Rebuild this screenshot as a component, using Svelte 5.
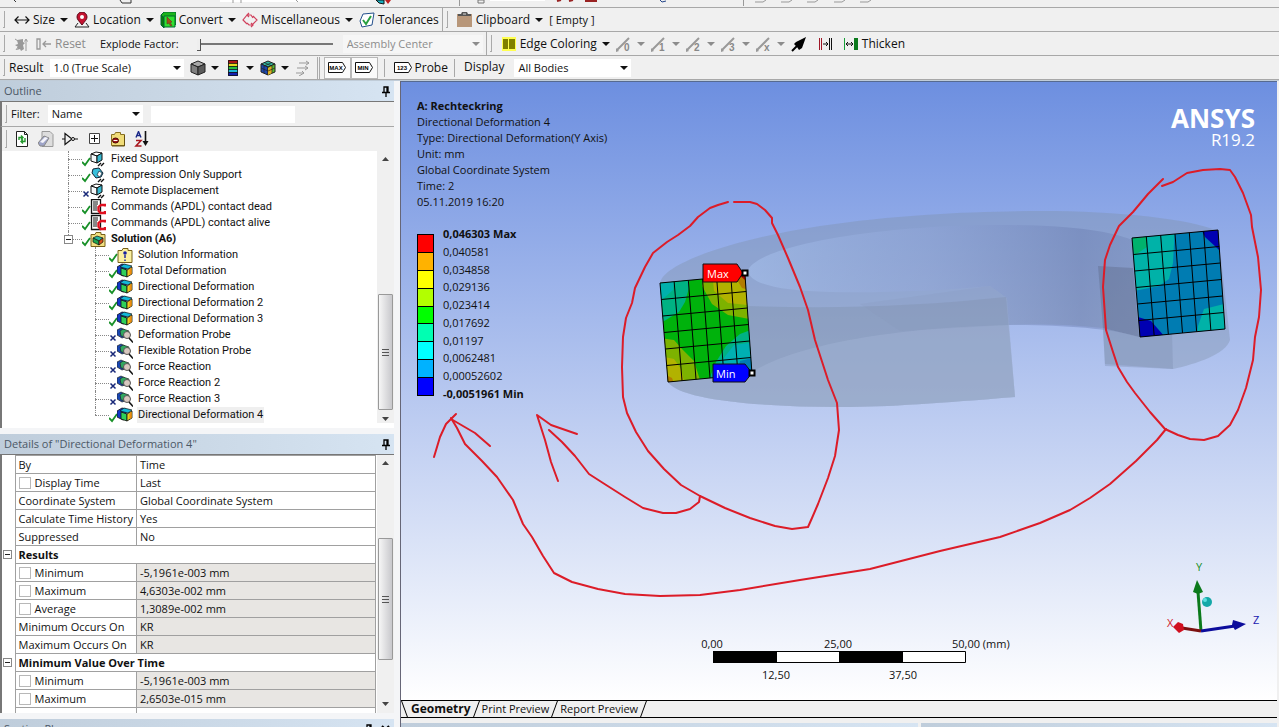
<script>
  const supports = [
    { label: 'Fixed Support', icon: 'support', ok: true },
    { label: 'Compression Only Support', icon: 'compression', ok: true },
    { label: 'Remote Displacement', icon: 'support', ok: false },
    { label: 'Commands (APDL) contact dead', icon: 'commands', ok: true },
    { label: 'Commands (APDL) contact alive', icon: 'commands', ok: true },
  ];

  const results = [
    { label: 'Solution Information', icon: 'info', ok: true },
    { label: 'Total Deformation', icon: 'result', ok: true },
    { label: 'Directional Deformation', icon: 'result', ok: true },
    { label: 'Directional Deformation 2', icon: 'result', ok: true },
    { label: 'Directional Deformation 3', icon: 'result', ok: true },
    { label: 'Deformation Probe', icon: 'probe', ok: false },
    { label: 'Flexible Rotation Probe', icon: 'probe', ok: false },
    { label: 'Force Reaction', icon: 'probe', ok: false },
    { label: 'Force Reaction 2', icon: 'probe', ok: false },
    { label: 'Force Reaction 3', icon: 'probe', ok: false },
    { label: 'Directional Deformation 4', icon: 'result', ok: true, selected: true },
  ];

  const details = [
    { name: 'By', value: 'Time' },
    { name: 'Display Time', value: 'Last', check: true },
    { name: 'Coordinate System', value: 'Global Coordinate System' },
    { name: 'Calculate Time History', value: 'Yes' },
    { name: 'Suppressed', value: 'No' },
    { group: 'Results' },
    { name: 'Minimum', value: '-5,1961e-003 mm', check: true, locked: true },
    { name: 'Maximum', value: '4,6303e-002 mm', check: true, locked: true },
    { name: 'Average', value: '1,3089e-002 mm', check: true, locked: true },
    { name: 'Minimum Occurs On', value: 'KR', locked: true },
    { name: 'Maximum Occurs On', value: 'KR', locked: true },
    { group: 'Minimum Value Over Time' },
    { name: 'Minimum', value: '-5,1961e-003 mm', check: true, locked: true },
    { name: 'Maximum', value: '2,6503e-015 mm', check: true, locked: true },
  ];

  const bands = ['#ff0000', '#ffb200', '#ffff00', '#b2ff00', '#00ff00', '#00ffb2', '#00ffff', '#00b2ff', '#0000ff'];
  const limits = ['0,046303 Max', '0,040581', '0,034858', '0,029136', '0,023414', '0,017692', '0,01197', '0,0062481', '0,00052602', '-0,0051961 Min'];

  // corners run top left, top right, bottom right, bottom left
  const leftSection = [[660, 283], [745, 275], [752, 374], [668, 382]];
  const rightSection = [[1132, 238], [1218, 230], [1225, 329], [1140, 337]];

  const mix = (a, b, t) => [a[0] + (b[0] - a[0]) * t, a[1] + (b[1] - a[1]) * t];

  function meshPath([tl, tr, br, bl], n = 6) {
    let d = '';
    for (let i = 0; i <= n; i++) {
      const t = i / n;
      d += `M${mix(tl, tr, t)}L${mix(bl, br, t)}M${mix(tl, bl, t)}L${mix(tr, br, t)}`;
    }
    return d;
  }

  const edges = ['0', '1', '2', '3', 'x'];
</script>

{#snippet caret()}
  <svg class="caret" width="8" height="4" viewBox="0 0 8 4"><path d="M0 0h8L4 4z" fill="currentColor" /></svg>
{/snippet}

{#snippet pin()}
  <svg width="8" height="11" viewBox="0 0 8 11"><path d="M2 6V1h4v5M5 1v5M0 6.500h8M4 7v4" fill="none" stroke="#000" stroke-width="1.300" /></svg>
{/snippet}

{#snippet icon(name)}
  <svg class="icon" width="16" height="16" viewBox="0 0 16 16" fill="none" aria-hidden="true">
    {#if name === 'size'}
      <path d="M1 8h14M4.500 4.500L1 8l3.500 3.500M11.500 4.500L15 8l-3.500 3.500" stroke="#111" stroke-width="1.200" />
    {:else if name === 'location'}
      <path d="M8 13C5 9 3 7.500 3 5a5 5 0 0110 0c0 2.500-2 4-5 8z" fill="#c41230" stroke="#5c0818" />
      <circle cx="8" cy="5" r="2" fill="#fff" />
      <path d="M4 11l-3 4h14l-3-4" stroke="#222" />
    {:else if name === 'convert'}
      <path d="M1 3l3-3h12v12l-3 3" fill="#1bb41b" stroke="#063" />
      <path d="M1 3l3 3v10l-3-3z" fill="#0a7a0a" stroke="#063" />
      <path d="M4 4h11v11H4z" fill="#2fe02f" stroke="#063" />
      <path d="M7 5l5 5-2 .5 2 3-1.500.5-1.500-3L7 12z" fill="#a05018" stroke="#632" stroke-width=".6" />
    {:else if name === 'misc'}
      <path d="M5 3L1 8l4 4M11 4l4 4-5 5M6 3h3l2 3M10 13H7l-2-2M7 1L5 3l2 2M9 11l2 2-2 2" stroke="#d0405c" stroke-width="1.200" />
    {:else if name === 'tolerance'}
      <path d="M4 2l11-1-2 12-10 2-2-6z" fill="#fff" stroke="#24508c" />
      <path d="M4 8l3 4 5-8" stroke="#28a040" stroke-width="2" />
    {:else if name === 'clipboard'}
      <path d="M0 2h15v13H0z" fill="#b8977a" />
      <path d="M1 4h13v-2h-3l-1-2H5L4 2H1z" fill="#555" />
      <path d="M6 2h3" stroke="#ddd" />
    {:else if name === 'explode'}
      <path d="M3 4l6-1v3l2 1-2 2 1 4-3 2-1-2-3 1 1-3-3-2 3-1z" fill="#999" />
      <path d="M1 3l3 2M2 14l2-3M12 15V4M10.500 5.500L12 3l1.500 2.500" stroke="#999" />
    {:else if name === 'reset'}
      <path d="M1 3h3v10H1zM7 8h8M10 5L7 8l3 3" stroke="#999" stroke-width="1.300" />
    {:else if name === 'edgeColor'}
      <path d="M1 1h14v14H1z" fill="#ffff50" />
      <path d="M2 3h5v10H2zM8 3h6v10H8z" fill="#808000" />
    {:else if name === 'pointer'}
      <path d="M3 8l2-2L15 1l-4 11-3 2-2-3z" fill="#000" />
      <path d="M1 15l6-6" stroke="#000" stroke-width="2" />
    {:else if name === 'gap'}
      <path d="M2.500 2v12M4.500 2v12" stroke="#a01828" /><path d="M12.500 2v12M14.500 2v12M6 8h5M9 6l2 2-2 2" stroke="#111" />
    {:else if name === 'thicken'}
      <path d="M1.500 2v12" stroke="#18a038" /><path d="M11 2h4v12h-4z" fill="#0b7a1c" /><path d="M3 8h7M5 6L3 8l2 2M8 6l2 2-2 2" stroke="#111" />
    {:else if name === 'grayCube'}
      <path d="M1 4l7-3 7 3-7 3z" fill="#a8a8a8" stroke="#222" /><path d="M1 4l7 3v8l-7-3z" fill="#808080" stroke="#222" /><path d="M15 4L8 7v8l7-3z" fill="#5c5c5c" stroke="#222" />
    {:else if name === 'legend'}
      <path d="M3 0h10v4H3z" fill="#b01818" /><path d="M3 3h10v4H3z" fill="#e8d820" /><path d="M3 6h10v4H3z" fill="#28c040" /><path d="M3 9h10v3H3z" fill="#20b8d8" /><path d="M3 12h10v4H3z" fill="#1420b0" />
      <path d="M3.500.5h9v15h-9zM3 3.500h10M3 6.500h10M3 9.500h10M3 12.500h10" stroke="#111" stroke-width=".8" />
    {:else if name === 'contour'}
      <path d="M1 4l7-3 7 3-7 3z" fill="#30b8a0" stroke="#222" /><path d="M1 4l7 3v8l-7-3z" fill="#1c48b0" stroke="#222" /><path d="M15 4L8 7v8l7-3z" fill="#58b830" stroke="#222" />
      <path d="M8 8l4-2v7l-4 2z" fill="#e0b020" /><path d="M4 2.500L12 6v7M12 2.500L4 6v7M1 8l7 3 7-3" stroke="#222" stroke-width=".7" />
    {:else if name === 'vectors'}
      <path d="M4 3h10M11 1l3 2-3 2M2 8h11M10 6l3 2-3 2M1 13h8M7 11l2 2-5 3" stroke="#999" />
    {:else if name === 'refresh'}
      <path d="M2.500.5h8l3 3v12h-11z" fill="#fff" stroke="#222" /><path d="M10.500.5v3h3" stroke="#222" />
      <path d="M5 9V6.500h4M7 4.500l2 2-2 2M11 7v3.500H7M9 8.500l-2 2 2 2" stroke="#22982c" stroke-width="1.400" />
    {:else if name === 'eraser'}
      <path d="M4 .5h8l3 3v12H4z" fill="#ddd" stroke="#999" /><path d="M0 12l6-7 5 2-5 8H2z" fill="#9ea4c8" stroke="#888" /><path d="M2 11l5-5 3 1-5 5z" fill="#f4f4fa" />
    {:else if name === 'gate'}
      <path d="M0 8h3M12.500 8H16M3 2.500v11L10 8z" stroke="#111" stroke-width="1.200" /><circle cx="11" cy="8" r="1.500" fill="#fff" stroke="#111" />
    {:else if name === 'expand'}
      <path d="M3.500 2.500h10v10h-10z" fill="#fff" stroke="#444" /><path d="M5 7.500h7M8.500 4v7" stroke="#111" />
    {:else if name === 'folder'}
      <path d="M1.500 3.500h3l1-2h5v2h4v11h-13z" fill="#f0dc78" stroke="#887020" /><path d="M14.500 4v11H2" stroke="#665010" /><ellipse cx="5.500" cy="9.500" rx="3" ry="2.500" fill="#a01818" stroke="#400" /><path d="M3.500 9.500h4" stroke="#fff" />
    {:else if name === 'sort'}
      <path d="M2 6.500L4.500.5 7 6.500M3 4.500h3" stroke="#1a2888" stroke-width="1.400" /><path d="M2 9.500h5l-5 5.500h5.500" stroke="#a81820" stroke-width="1.600" /><path d="M11.500 0v12" stroke="#111" stroke-width="1.600" /><path d="M8.500 10h6l-3 5z" fill="#111" />
    {:else if name === 'support'}
      <path d="M1 3l5-2 6 1-5 3z" fill="#fff" stroke="#111" /><path d="M1 3l6 2v7l-6-2z" fill="#f4f8fa" stroke="#111" /><path d="M12 2L7 5v7l5-3z" fill="#38b8d0" stroke="#111" /><path d="M8 15l3-3M11 15l3-3" stroke="#111" stroke-width="1.400" />
    {:else if name === 'compression'}
      <path d="M3 2l6-1 4 5-2 4-5 1-4-5z" fill="#38c0dc" stroke="#123" /><path d="M9 4l3 2-2 4-3-2z" fill="#fff" stroke="#123" stroke-width=".7" /><path d="M8 15l3-3M11 15l3-3" stroke="#111" stroke-width="1.400" />
    {:else if name === 'commands'}
      <path d="M1.500.5h9v14h-9z" fill="#fff" stroke="#111" stroke-width="1.300" /><path d="M3 3h5M3 5h5M3 7h4M3 9h4M3 11h4" stroke="#111" /><path d="M15 7.500V6h-4L8.500 8v3.500l2 2.500h4.500v-2" stroke="#e01020" stroke-width="2.400" />
    {:else if name === 'solution'}
      <path d="M1 3.500h4l1-2h5v2h4v12H1z" fill="#f2e080" stroke="#776018" /><path d="M3 7l4-2 6 2-4 3z" fill="#28b8a0" stroke="#111" stroke-width=".7" /><path d="M3 7l6 3v4l-6-3z" fill="#20a850" stroke="#111" stroke-width=".7" /><path d="M9 10l4-3v4l-4 3z" fill="#d85018" stroke="#111" stroke-width=".7" />
    {:else if name === 'info'}
      <path d="M1 3.500h4l1-2h5v2h4v12H1z" fill="#fbf0a0" stroke="#776018" /><circle cx="8" cy="6" r="1.800" fill="#1620a0" /><path d="M8 8v3M8 12.500v1.500" stroke="#1620a0" stroke-width="1.400" />
    {:else if name === 'result'}
      <path d="M0 4l5-3 4 1v10l-3 1-6-3z" fill="#1238c8" stroke="#111" stroke-width=".8" />
      <path d="M3 4l4-3 8 2-4 3z" fill="#12b7d8" stroke="#111" stroke-width=".7" />
      <path d="M4 5l6 2v7l-6-2z" fill="#2ed05a" stroke="#111" stroke-width=".8" />
      <path d="M10 7l5-3v7l-5 3z" fill="#e8d020" stroke="#111" stroke-width=".8" />
      <path d="M12.500 6l2-1v6l-2 1z" fill="#f08a10" />
    {:else if name === 'probe'}
      <path d="M0 3l4-2 4 2v7l-3 1-5-3z" fill="#1848b8" stroke="#222" stroke-width=".7" /><path d="M3 4l3-2 6 2-2 6-6-1z" fill="#30a860" stroke="#222" stroke-width=".7" />
      <circle cx="10" cy="8" r="3.500" fill="#d8c8c0" stroke="#555" /><path d="M12 11l4 4.500" stroke="#111" stroke-width="1.500" />
    {/if}
  </svg>
{/snippet}

{#snippet tag(text)}
  <svg width="18" height="11" viewBox="0 0 18 11">
    <path d="M.5.5h14l3 5-3 5H.5z" fill="#fff" stroke="#111" />
    <text x="8" y="8" text-anchor="middle" font-size="6" font-weight="bold" font-family="Liberation Sans, sans-serif">{text}</text>
  </svg>
{/snippet}

{#snippet node(item)}
  <div class="row">
    <svg class="mark" width="9" height="16" viewBox="0 0 9 16" fill="none">
      {#if item.ok}
        <path d="M0 11l3 3 5-7" stroke="#189028" stroke-width="1.800" />
      {:else}
        <path d="M1.500 8.500l5 5M6.500 8.500l-5 5" stroke="#182878" stroke-width="1.500" />
      {/if}
    </svg>
    {@render icon(item.icon)}
    <span class="label" class:selected={item.selected} class:strong={item.strong}>{item.label}</span>
  </div>
{/snippet}

{#snippet scrollbar()}
  <div class="scrollbar" aria-hidden="true">
    <svg width="7" height="4" viewBox="0 0 7 4"><path d="M0 4h7L3.500 0z" fill="#444" /></svg>
    <div class="thumb"><i></i><i></i><i></i></div>
    <svg width="7" height="4" viewBox="0 0 7 4"><path d="M0 0h7L3.500 4z" fill="#444" /></svg>
  </div>
{/snippet}

<div class="app">
  <header>
    <div class="bar clipped">
      <svg width="700" height="7" viewBox="0 0 700 7" fill="none" aria-hidden="true">
        <path d="M14 0l2 2M120 0l2 3h9V0" stroke="#333" />
        <path d="M220 0h150" stroke="#fff" stroke-width="4" />
        <path d="M233 0v3M241 0v3M296 0l2 2" stroke="#999" />
        <path d="M376 0h8v4l-5-1z" fill="#18b0c0" stroke="#111" /><path d="M385 0h6l-3 4z" fill="#c02020" />
        <path d="M459.500 0v6" stroke="#999" />
        <path d="M478 0h6v3h-6z" stroke="#777" /><path d="M490 0h55" stroke="#fff" stroke-width="2" />
        <path d="M557 1l4-1M569 1l4-1M585 1h12" stroke="#922" stroke-width="2" />
        <path d="M660 0l2 2 4-1" stroke="#248" />
      </svg>
      <svg width="200" height="7" viewBox="0 0 200 7" fill="none" stroke="#999" aria-hidden="true">
        <path d="M43.500 0v6M55 2h8l3-2M81 2h8l3-2M107 2h8l3-2M134 2h8l3-2M160 2h8l3-2" />
      </svg>
    </div>

    <div class="bar">
      <div class="group">
        <button>{@render icon('size')}Size{@render caret()}</button>
        <button>{@render icon('location')}Location{@render caret()}</button>
        <button>{@render icon('convert')}Convert{@render caret()}</button>
        <button>{@render icon('misc')}Miscellaneous{@render caret()}</button>
        <button>{@render icon('tolerance')}Tolerances</button>
      </div>
      <div class="group">
        <button>{@render icon('clipboard')}Clipboard{@render caret()}</button>
        <span class="small">[ Empty ]</span>
      </div>
    </div>

    <div class="bar">
      <div class="group">
        <button disabled aria-label="Explode">{@render icon('explode')}</button>
        <button disabled>{@render icon('reset')}Reset</button>
        <label class="explode">Explode Factor: <input type="range" min="0" max="100" value="0" /></label>
        <div class="select center">
          <select disabled aria-label="Assembly Center"><option>Assembly Center</option></select>
          {@render caret()}
        </div>
      </div>
      <div class="group">
        <button>{@render icon('edgeColor')}Edge Coloring{@render caret()}</button>
        {#each edges as edge}
          <button disabled aria-label="Edges {edge}">
            <svg width="16" height="16" viewBox="0 0 16 16">
              <path d="M1 14L13 2" stroke="#999" stroke-width="2" /><path d="M0 12l3 3-3 1z" fill="#999" />
              <text x="8" y="15" font-size="10" font-weight="bold" fill="#888" font-family="Liberation Sans, sans-serif">{edge}</text>
            </svg>
            {@render caret()}
          </button>
        {/each}
        <button aria-label="Direction">{@render icon('pointer')}</button>
        <button class="spaced" aria-label="Gap">{@render icon('gap')}</button>
        <button class="spaced">{@render icon('thicken')}Thicken</button>
      </div>
    </div>

    <div class="bar">
      <div class="group tight">
        <label for="scale">Result</label>
        <div class="select scale">
          <select id="scale"><option>1.0 (True Scale)</option></select>
          {@render caret()}
        </div>
        <button aria-label="Geometry">{@render icon('grayCube')}{@render caret()}</button>
        <button aria-label="Contours">{@render icon('legend')}{@render caret()}</button>
        <button aria-label="Edges">{@render icon('contour')}{@render caret()}</button>
        <button disabled aria-label="Vectors">{@render icon('vectors')}</button>
        <span class="toggles">
          <button class="toggle" aria-label="Maximum">{@render tag('MAX')}</button>
          <button class="toggle" aria-label="Minimum">{@render tag('MIN')}</button>
        </span>
        <button class="probe">{@render tag('123')}Probe</button>
        <label class="display" for="bodies">Display</label>
        <div class="select bodies">
          <select id="bodies"><option>All Bodies</option></select>
          {@render caret()}
        </div>
      </div>
    </div>
  </header>

  <main>
    <aside>
      <section class="panel">
        <h2>Outline {@render pin()}</h2>
        <div class="tools filter">
          <label for="filter">Filter:</label>
          <div class="select name">
            <select id="filter"><option>Name</option></select>
            {@render caret()}
          </div>
          <input type="text" aria-label="Filter text" />
        </div>
        <div class="tools icons">
          {#each ['refresh', 'eraser', 'gate', 'expand', 'folder', 'sort'] as name}
            <button aria-label={name}>{@render icon(name)}</button>
          {/each}
        </div>
        <div class="scroller tree">
          <ul>
            {#each supports as item}
              <li>{@render node(item)}</li>
            {/each}
            <li>
              <span class="box"></span>
              {@render node({ label: 'Solution (A6)', icon: 'solution', ok: true, strong: true })}
              <ul>
                {#each results as item}
                  <li>{@render node(item)}</li>
                {/each}
              </ul>
            </li>
          </ul>
          {@render scrollbar()}
        </div>
      </section>

      <section class="panel grow">
        <h2>Details of "Directional Deformation 4" {@render pin()}</h2>
        <div class="scroller details">
          <table>
            <colgroup><col class="gutter" /><col class="name" /><col /></colgroup>
            <tbody>
              {#each details as row}
                <tr>
                  {#if row.group}
                    <td class="gutter"><span class="box"></span></td>
                    <th colspan="2">{row.group}</th>
                  {:else}
                    <td class="gutter"></td>
                    <td>
                      {#if row.check}
                        <label><input type="checkbox" />{row.name}</label>
                      {:else}
                        {row.name}
                      {/if}
                    </td>
                    <td class:locked={row.locked}>{row.value}</td>
                  {/if}
                </tr>
              {/each}
              <tr><td class="gutter"></td><td></td><td></td></tr>
            </tbody>
          </table>
          {@render scrollbar()}
        </div>
      </section>

      <section class="panel cut">
        <h2>
          <span>Section Planes</span>
          {@render pin()}
          <svg width="9" height="9" viewBox="0 0 9 9"><path d="M1 1l7 7M8 1L1 8" stroke="#000" stroke-width="2" /></svg>
        </h2>
      </section>
    </aside>

    <div class="work">
      <div class="viewport">
        <svg class="scene" viewBox="401 82 876 618" fill="none">
          <defs>
            <linearGradient id="wall" x1="0" x2="1">
              <stop offset="0" stop-color="#a9c4f0" stop-opacity=".5" />
              <stop offset=".45" stop-color="#93a8dc" stop-opacity=".35" />
              <stop offset=".85" stop-color="#6a7cb0" stop-opacity=".45" />
              <stop offset="1" stop-color="#7084b4" stop-opacity=".35" />
            </linearGradient>
            <clipPath id="leftClip"><polygon points={leftSection.join(' ')} /></clipPath>
            <clipPath id="rightClip"><polygon points={rightSection.join(' ')} /></clipPath>
          </defs>

          <!-- ring body -->
          <path d="M660 283C664 262 740 238 820 226C900 214 980 211 1040 211C1120 211 1190 219 1218 231L1230 340C1226 354 1196 364 1173 369L1105 364L1103 328C1070 324 1040 324 1009 325L1015 397C940 403 890 407 840 407C760 407 680 400 668 382Z" fill="#7f90a8" fill-opacity=".38" />
          <path d="M748 270C760 245 880 225 1000 225C1070 225 1110 231 1132 240L1140 337C1110 328 1060 325 1009 325L1007 298L990 286C940 291 880 293 830 292C780 291 748 284 748 270Z" fill="url(#wall)" />
          <path d="M748 306C840 309 920 306 1006 297L1015 397C940 403 890 407 840 407C760 407 680 400 668 382L752 374Z" fill="#7c8ea8" fill-opacity=".34" />
          <path d="M752 372C790 348 880 328 1009 325L1015 397C940 403 890 407 840 407C760 407 680 400 668 382Z" fill="#b3c3e8" fill-opacity=".24" />
          <path d="M990 286L1007 298L1009 325L900 331L860 304Z" fill="#8798b8" fill-opacity=".2" />
          <path d="M1098 266L1133 268L1139 337L1103 328Z" fill="#5c6a88" fill-opacity=".4" />
          <path d="M1103 328L1140 337L1172 332L1173 369L1105 366Z" fill="#8090b4" fill-opacity=".4" />

          <g clip-path="url(#leftClip)">
            <path d="M655 270h105v120H655z" fill="#00b20c" />
            <path d="M655 270h34l0 18-4 14-6 10-20 12z" fill="#00b283" />
            <path d="M655 270h20l-2 20-16 14z" fill="#00b0ac" />
            <path d="M704 270h50v50l-26-5-16-11-10-18z" fill="#7db200" />
            <path d="M712 270h44v36l-28-3-14-12z" fill="#b2b200" />
            <path d="M731 270h25v22l-14-4z" fill="#b27c00" />
            <path d="M738 274h14v12z" fill="#b20000" />
            <path d="M660 338l14 2 8 9 12 12 7 22h-40z" fill="#7db200" />
            <path d="M660 356l14 3 7 10 4 16h-25z" fill="#b2b200" />
            <path d="M664 374l8 4 3 8h-12z" fill="#b27c00" />
            <path d="M756 328l-16 6-14 12-10 16-8 20h50z" fill="#00b283" />
            <path d="M756 342l-22 3-14 18-4 20h40z" fill="#00b0b2" />
            <path d="M756 357l-16 4-6 22h24z" fill="#007cb2" />
          </g>
          <path d={meshPath(leftSection)} stroke="#000" />

          <g clip-path="url(#rightClip)">
            <path d="M1125 225h110v120h-110z" fill="#007cb2" />
            <path d="M1125 225h50l-2 38-4 16-10 7-25 5z" fill="#00b2a8" />
            <path d="M1125 225h22v22l-12 8z" fill="#00b26c" />
            <path d="M1199 225h30v34l-24-22z" fill="#0000b2" />
            <path d="M1138 317l13 4 14 16-26 6z" fill="#0000b2" />
            <path d="M1196 340l2-14 6-17 24-6v36z" fill="#00b2a8" />
          </g>
          <path d={meshPath(rightSection)} stroke="#000" />

          <path d="M703 264h34l6 9-6 9h-34z" fill="#f00" stroke="#111" />
          <path d="M713 364h32l7 9-7 9h-32z" fill="#00f" stroke="#111" />
          <path d="M742.500 270.500h5v5h-5zM749.500 370.500h5v5h-5z" fill="#fff" stroke="#000" stroke-width="2" />
          <text x="707" y="278" fill="#fff">Max</text>
          <text x="716" y="378" fill="#fff">Min</text>

          <g class="ink">
            <path d="M728 202L718 205L710 208L698 217L690 226L678 235L667 242L653 253L645 267L635 288L632 303L626 318L623 337L622 367L623 397L627 413L636 432L648 451L664 469L681 485L700 496L725 508L750 518L775 526L792 529L808 527L812 518L818 504L828 478L835 456L839 430L837 403L828 380L815 340L808 310L800 287L788 258L778 235L772 223V218L765 210L757 204L750 202H734" />
            <path d="M1163 179L1148 194L1133 212L1119 226L1110 245L1105 260L1103 287L1106 330L1113 352L1118 367L1127 382L1135 393L1150 412L1165 429L1178 435L1190 439L1204 440L1218 436L1230 425L1238 410L1246 388L1253 360L1255 337L1259 317L1261 290L1258 257L1252 227L1251 215L1243 193L1235 177L1230 170L1220 169L1203 170L1187 173L1173 182L1162 186" />
            <path d="M1166 429L1157 440L1136 461L1110 484L1090 498L1070 510L1040 523L1000 537L940 551L870 569L800 580L740 590L700 595L660 596L625 594L598 589L572 582L554 573L543 556L532 537L523 524L513 500L497 477L482 461L465 444L457 428L451 418" />
            <path d="M434 457L440 437L446 424L456 414M451 419L463 426L475 433L490 446" />
            <path d="M700 496L699 502L690 509L676 513L663 513L643 508L625 497L603 483L589 474L575 456L562 442L549 430" />
            <path d="M558 481L551 462L545 440L537 415L551 425L577 434" />
          </g>

          <g>
            <path d="M713.500 651.500h252v11h-252z" fill="#fff" stroke="#000" />
            <path d="M713 651h64v12h-64zM839 651h64v12h-64z" fill="#000" />
            <text x="712" y="648" text-anchor="middle">0,00</text>
            <text x="838" y="648" text-anchor="middle">25,00</text>
            <text x="952" y="648">50,00 (mm)</text>
            <text x="776" y="679" text-anchor="middle">12,50</text>
            <text x="903" y="679" text-anchor="middle">37,50</text>
          </g>

          <path d="M1201 631L1198 592" stroke="#0b7a1c" stroke-width="3" />
          <path d="M1197 580l6 12-5 2-5-2z" fill="#0b7a1c" />
          <path d="M1201 631L1235 626" stroke="#0c0c9c" stroke-width="3" />
          <path d="M1246 624l-13-4-1 5 3 5z" fill="#0c0c9c" />
          <path d="M1201 631L1182 628" stroke="#7c1010" stroke-width="3" />
          <path d="M1173 627l5-5 5 2 1 6-5 3z" fill="#d01020" />
          <circle cx="1207" cy="602" r="5" fill="#14a8a8" /><circle cx="1205" cy="600" r="2" fill="#5ce0e0" />
          <text x="1196" y="571" fill="#189028">Y</text>
          <text x="1253" y="624" fill="#2020b0">Z</text>
          <text x="1167" y="627" fill="#d01828">X</text>
        </svg>

        <div class="overlay">
          <div class="info">
            <strong>A: Rechteckring</strong>
            <span>Directional Deformation 4</span>
            <span>Type: Directional Deformation(Y Axis)</span>
            <span>Unit: mm</span>
            <span>Global Coordinate System</span>
            <span>Time: 2</span>
            <span>05.11.2019 16:20</span>
            <div class="legend">
              <div class="bands">
                {#each bands as color}
                  <i style="background: {color}"></i>
                {/each}
              </div>
              <ol>
                {#each limits as limit, i}
                  <li class:strong={i === 0 || i === limits.length - 1}>{limit}</li>
                {/each}
              </ol>
            </div>
          </div>
          <div class="brand"><strong>ANSYS</strong><span>R19.2</span></div>
        </div>
      </div>

      <nav>
        <a class="active" href="#geometry">Geometry</a>
        <a href="#print">Print Preview</a>
        <a href="#report">Report Preview</a>
      </nav>
      <div class="strips"><i></i><i></i></div>
    </div>
  </main>
</div>

<style>
  :global(body) {
    background: #f0f0f0;
    overflow: hidden;
  }

  .app {
    display: flex;
    flex-direction: column;
    height: 100vh;
    font: 12px/16px 'Open Sans', 'Noto Sans', sans-serif;
    color: #111;
  }

  button,
  select,
  input {
    font: inherit;
    color: inherit;
    margin: 0;
    padding: 0;
    border: 0;
    background: none;
  }

  button {
    display: flex;
    align-items: center;
    gap: 3px;
    white-space: nowrap;
  }

  button:disabled,
  .center {
    color: #8c8c8c;
  }

  svg {
    flex: none;
    display: block;
  }

  .bar {
    display: flex;
    height: 23px;
    border-bottom: 1px solid #a8a8a8;
  }

  .clipped {
    height: 7px;
    overflow: hidden;
  }

  .group {
    display: flex;
    align-items: center;
    gap: 6px;
    padding: 0 3px 0 14px;
    border-right: 1px solid #a8a8a8;
    position: relative;
  }

  .group:last-child {
    border-right: 0;
  }

  .tight {
    padding-left: 9px;
  }

  .group::before,
  .tools::before {
    content: '';
    position: absolute;
    left: 3px;
    top: 3px;
    bottom: 3px;
    width: 1px;
    border: solid #aaa;
    border-width: 0 1px 1px 0;
  }

  .group .caret {
    margin-left: 2px;
  }

  .small {
    font-size: 11px;
  }

  .select {
    position: relative;
    background: #fff;
    height: 18px;
  }

  .select select {
    appearance: none;
    width: 100%;
    height: 18px;
    padding-left: 4px;
    font-size: 11px;
  }

  .select .caret {
    position: absolute;
    right: 3px;
    top: 7px;
    pointer-events: none;
  }

  .center {
    width: 140px;
    margin-left: 4px;
    background: #f6f6f6;
  }

  .center select {
    opacity: 1;
  }

  .explode {
    display: flex;
    align-items: center;
    gap: 18px;
    margin-left: 8px;
    font-size: 11px;
    white-space: nowrap;
  }

  input[type='range'] {
    appearance: none;
    width: 136px;
    height: 14px;
  }

  input[type='range']::-webkit-slider-runnable-track {
    height: 2px;
    background: #777;
  }

  input[type='range']::-webkit-slider-thumb {
    appearance: none;
    width: 4px;
    height: 12px;
    margin-top: -4px;
    background: #eee;
    border-right: 1px solid #555;
    border-bottom: 1px solid #555;
  }

  .spaced {
    margin-left: 4px;
  }

  .scale {
    width: 134px;
  }

  .bodies {
    width: 117px;
    margin-left: 4px;
  }

  .toggles {
    display: flex;
    padding-left: 4px;
    border-left: 3px double #aaa;
  }

  .toggle {
    width: 27px;
    height: 22px;
    justify-content: center;
    background: #fafafa;
    border: 1px solid #b8b8b8;
  }

  .probe,
  .display {
    height: 18px;
    border-left: 1px solid #a8a8a8;
    padding-left: 9px;
  }

  main {
    flex: 1;
    min-height: 0;
    display: flex;
    border-top: 1px solid #c0ccd8;
  }

  aside {
    width: 394px;
    flex: none;
    display: flex;
    flex-direction: column;
    gap: 6px;
    padding-right: 6px;
    background: #f4f5f7;
  }

  .panel {
    display: flex;
    flex-direction: column;
  }

  .grow {
    flex: 1;
    min-height: 0;
  }

  .cut {
    height: 8px;
    overflow: hidden;
  }

  h2 {
    display: flex;
    justify-content: space-between;
    align-items: center;
    gap: 8px;
    height: 20px;
    flex: none;
    margin: 0;
    padding: 0 4px;
    font-size: 11px;
    font-weight: normal;
    color: #4c5866;
    background: linear-gradient(90deg, #bfcddb, #d6e4f2);
  }

  h2 span {
    flex: 1;
  }

  .tools {
    position: relative;
    display: flex;
    align-items: center;
    height: 24px;
    background: #f0f0f0;
    border-left: 2px solid #777;
  }

  .filter {
    gap: 8px;
    padding-left: 9px;
    font-size: 11px;
    border-top: 1px solid #777;
    border-bottom: 1px solid #a8a8a8;
  }

  .filter .name {
    width: 95px;
  }

  .filter input {
    width: 144px;
    height: 17px;
    background: #fff;
  }

  .icons {
    gap: 8px;
    padding-left: 12px;
  }

  .scroller {
    display: flex;
    background: #fff;
    border-left: 2px solid #777;
    overflow: hidden;
  }

  .tree {
    padding-bottom: 5px;
    font-family: Roboto, 'Open Sans', sans-serif;
    font-size: 11px;
    line-height: 16px;
  }

  ul {
    list-style: none;
    margin: 0;
    padding: 0 0 0 66px;
    flex: 1;
  }

  ul ul {
    padding-left: 27px;
  }

  li {
    position: relative;
  }

  ul > li::before {
    content: '';
    position: absolute;
    left: 0;
    top: 0;
    bottom: 0;
    border-left: 1px dotted #888;
  }

  ul > li:last-child::before {
    bottom: auto;
    height: 8px;
  }

  .row {
    display: flex;
    align-items: center;
    height: 16px;
  }

  .row::before {
    content: '';
    width: 14px;
    border-top: 1px dotted #888;
  }

  .mark {
    margin-right: -1px;
  }

  .label {
    margin-left: 4px;
    padding: 0 1px;
    white-space: nowrap;
  }

  .selected {
    background: #efefef;
  }

  .strong {
    font-weight: bold;
  }

  .box {
    display: block;
    width: 7px;
    height: 7px;
    border: 1px solid #888;
    background: linear-gradient(#222, #222) center / 5px 1px no-repeat #fff;
  }

  li > .box {
    position: absolute;
    left: -4px;
    top: 4px;
  }

  .scrollbar {
    width: 15px;
    flex: none;
    display: flex;
    flex-direction: column;
    align-items: center;
    padding: 6px 1px 2px;
    background: #f0f0f0;
  }

  .thumb {
    width: 13px;
    height: 114px;
    margin: auto 0 7px;
    display: flex;
    flex-direction: column;
    align-items: center;
    justify-content: center;
    gap: 2px;
    border: 1px solid #999;
    border-radius: 1px;
    background: linear-gradient(90deg, #f6f6f6, #c8c8cc);
  }

  .thumb i {
    width: 7px;
    height: 1px;
    background: #555;
  }

  .details {
    flex: 1;
    min-height: 0;
    border-top: 1px solid #777;
    font-size: 11px;
  }

  .details .scrollbar {
    padding-bottom: 7px;
  }

  .details .thumb {
    height: 120px;
    margin-bottom: 42px;
  }

  table {
    flex: 1;
    table-layout: fixed;
    border-collapse: collapse;
    height: 0;
    margin-right: 1px;
  }

  col.gutter {
    width: 13px;
  }

  col.name {
    width: 119px;
  }

  td,
  th {
    height: 17px;
    padding: 0 3px;
    border: 1px solid #a0a0a0;
    line-height: 17px;
    text-align: left;
    white-space: nowrap;
  }

  td.gutter {
    padding: 0 1px;
    border: 0;
  }

  .locked {
    background: #e8e6e3;
  }

  td label {
    display: flex;
    align-items: center;
    gap: 4px;
  }

  input[type='checkbox'] {
    appearance: none;
    width: 12px;
    height: 12px;
    border: 1px solid #b8b8b8;
    background: #fff;
  }

  .work {
    flex: 1;
    min-width: 0;
    display: flex;
    flex-direction: column;
    padding-right: 2px;
    border-left: 1px solid #667;
  }

  .viewport {
    position: relative;
    flex: 1;
    min-height: 0;
    border-top: 1px solid #566a90;
    background: linear-gradient(#6d8fe0, #fff);
  }

  .scene {
    position: absolute;
    inset: 0;
    width: 100%;
    height: 100%;
    font-size: 11px;
  }

  .scene text:not([fill]) {
    fill: #111;
  }

  .ink {
    stroke: #dc1c28;
    stroke-width: 2;
    stroke-linejoin: round;
    stroke-linecap: round;
  }

  .overlay {
    position: relative;
    display: flex;
    justify-content: space-between;
    padding: 16px 22px 0 16px;
    font-size: 11px;
  }

  .info {
    display: flex;
    flex-direction: column;
  }

  .legend {
    display: flex;
    gap: 9px;
    margin-top: 16px;
  }

  .bands {
    display: flex;
    flex-direction: column;
    width: 15px;
    height: 160px;
    margin-top: 8px;
    border: 1px solid #000;
  }

  .bands i {
    flex: 1;
    border-top: 1px solid #000;
  }

  .bands i:first-child {
    border-top: 0;
  }

  ol {
    display: flex;
    flex-direction: column;
    justify-content: space-between;
    height: 176px;
    list-style: none;
    margin: 0;
    padding: 0;
  }

  .brand {
    display: flex;
    flex-direction: column;
    align-items: flex-end;
    color: #fff;
    font-size: 17px;
    line-height: 18px;
    padding-top: 7px;
  }

  .brand strong {
    font-size: 26px;
    line-height: 26px;
  }

  nav {
    position: relative;
    display: flex;
    height: 16px;
    padding-left: 10px;
    font-size: 11px;
    border-top: 1px solid #000;
    border-bottom: 1px solid #000;
  }

  nav a {
    position: relative;
    padding-right: 11px;
    color: #111;
    text-decoration: none;
    line-height: 16px;
  }

  nav a::after,
  nav::before {
    content: '';
    position: absolute;
    right: 5px;
    top: 0;
    height: 16px;
    border-left: 1px solid #000;
    transform: skewX(-20deg);
  }

  nav::before {
    left: 3px;
    transform: skewX(20deg);
  }

  nav .active {
    font-size: 12px;
    font-weight: bold;
  }

  .strips {
    display: flex;
    gap: 3px;
    padding-top: 5px;
  }

  .strips i {
    flex: 1;
    height: 4px;
    background: linear-gradient(90deg, #bfcddb, #d6e4f2);
  }

  .strips i:first-child {
    flex: 0 0 59%;
  }
</style>
